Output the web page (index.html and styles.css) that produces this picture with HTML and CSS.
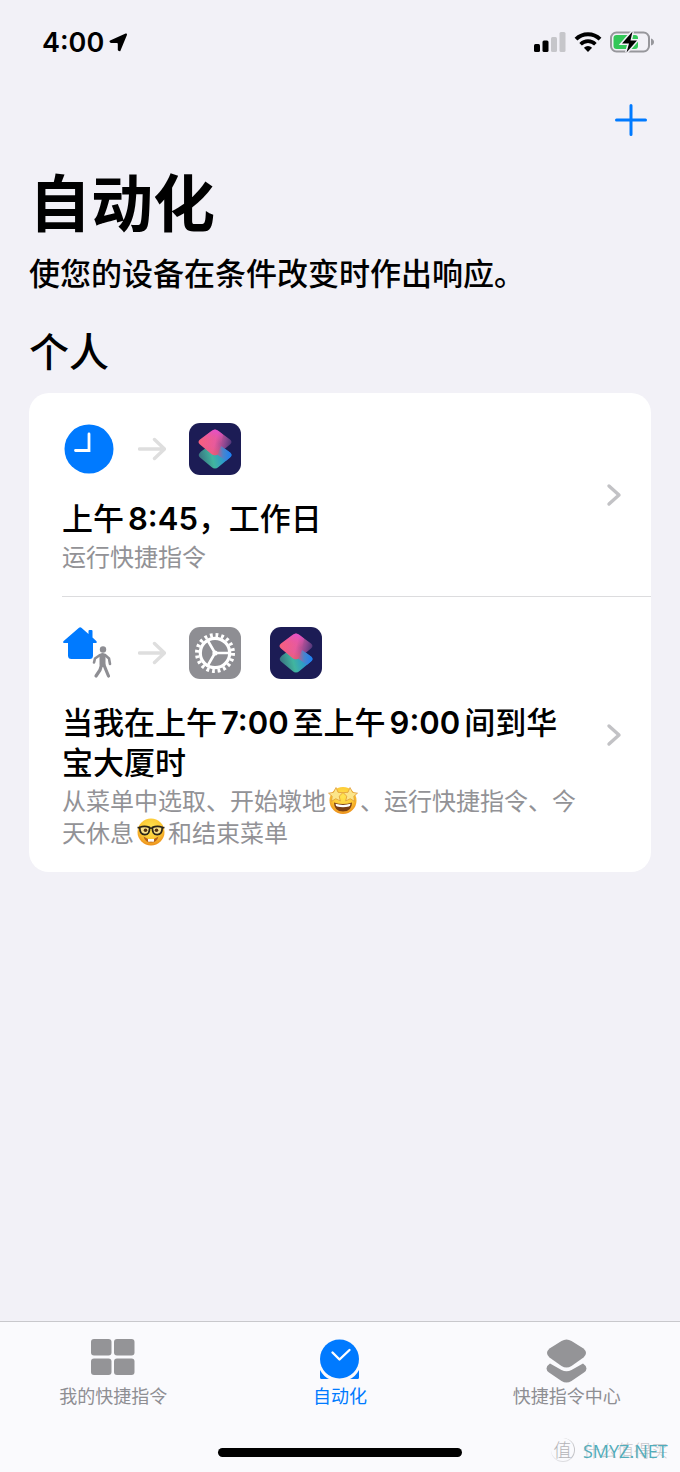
FILE: index.html
```html
<!DOCTYPE html>
<html lang="zh-CN">
<head>
    <meta charset="UTF-8">
    <meta name="viewport" content="width=device-width, initial-scale=1">
    <title>自动化</title>
    <link rel="stylesheet" href="styles.css">
</head>
<body>
    <!-- 公用图标 -->
    <svg class="defs" aria-hidden="true">
        <defs>
            <linearGradient id="pink" x1="0" y1="0.4" x2="1" y2="0.6">
                <stop offset="0" stop-color="#f9607a"/>
                <stop offset="0.5" stop-color="#e85a9c"/>
                <stop offset="0.8" stop-color="#8b4790"/>
                <stop offset="1" stop-color="#4a3576"/>
            </linearGradient>
            <linearGradient id="glow" x1="0.5" y1="0" x2="0.4" y2="1">
                <stop offset="0" stop-color="#e24be0" stop-opacity="0.7"/>
                <stop offset="0.5" stop-color="#e85a9c" stop-opacity="0"/>
                <stop offset="1" stop-color="#f4605f" stop-opacity="0.7"/>
            </linearGradient>
            <linearGradient id="teal" x1="0" y1="0.6" x2="1" y2="0.4">
                <stop offset="0" stop-color="#39707f"/>
                <stop offset="0.4" stop-color="#41b59f"/>
                <stop offset="1" stop-color="#1a80f5"/>
            </linearGradient>
            <linearGradient id="fold" x1="0" y1="0.5" x2="1" y2="0.5">
                <stop offset="0" stop-color="#b8628f"/>
                <stop offset="0.4" stop-color="#4a85cc"/>
                <stop offset="1" stop-color="#1a80f5"/>
            </linearGradient>
            <radialGradient id="face" cx="0.5" cy="0.35" r="0.65">
                <stop offset="0" stop-color="#ffe552"/>
                <stop offset="0.6" stop-color="#fdc934"/>
                <stop offset="1" stop-color="#ec8f1c"/>
            </radialGradient>
        </defs>
        <symbol id="shortcuts" viewBox="0 0 52 52">
            <rect width="52" height="52" rx="11" fill="#1c1c55"/>
            <path d="M12 28.500 L24 20 Q26 18.500 28 20 L41 29.500 Q44 32 41 34.500 L29.500 44 Q26 47 22.500 44 L11 34.500 Q8 32 12 28.500Z" fill="url(#teal)"/>
            <path d="M22.500 8 Q26 5 29.500 8 L41 16.500 Q44 19 41 21.500 L29.500 31 Q26 33.500 22.500 31 L11 21.500 Q8 19 11 16.500Z" fill="url(#pink)"/>
            <path d="M22.500 8 Q26 5 29.500 8 L34 11.500 L31 29.800 L29.500 31 Q26 33.500 22.500 31 L11 21.500 Q8 19 11 16.500Z" fill="url(#glow)"/>
            <path d="M32 23 L41 29.500 Q44 32 41 34.500 L37 37.800 L28.500 31.800Z" fill="url(#fold)"/>
        </symbol>
        <symbol id="arrow" viewBox="0 0 28 24">
            <path d="M1.500 12H26M16.500 2.500L26.500 12l-10 9.500" fill="none" stroke="#dedede" stroke-width="3.400" stroke-linecap="round" stroke-linejoin="round"/>
        </symbol>
        <symbol id="chevron" viewBox="0 0 16 24">
            <path d="M3 3l10 9L3 21" fill="none" stroke="#c2c2c5" stroke-width="3.400" stroke-linecap="round" stroke-linejoin="round"/>
        </symbol>
    </svg>

    <header class="status">
        <div class="time">
            <span>4:00</span>
            <svg width="19" height="19" viewBox="0 0 19 19"><path d="M17 1.500L1.500 8.300 2 9H8.500L9.800 10.300V16.800L10.600 17.200Z" stroke="#000" stroke-width="2" stroke-linejoin="round"/></svg>
        </div>
        <div class="signals">
            <svg width="32" height="20" viewBox="0 0 32 20">
                <rect x="0" y="12" width="6" height="8" rx="1.500"/>
                <rect x="8.500" y="8.500" width="6" height="11.500" rx="1.500"/>
                <rect x="17" y="5" width="6" height="15" rx="1.500" fill="#c6c6ca"/>
                <rect x="25.500" y="0" width="6" height="20" rx="1.500" fill="#c6c6ca"/>
            </svg>
            <svg width="28" height="20" viewBox="0 0 28 20">
                <path d="M2 7.200a17 17 0 0 1 24 0" fill="none" stroke="#000" stroke-width="4"/>
                <path d="M6.600 12.200a10.500 10.500 0 0 1 14.800 0" fill="none" stroke="#000" stroke-width="3.600"/>
                <path d="M9.900 15.700a6 6 0 0 1 8.200 0L14 20Z"/>
            </svg>
            <svg width="44" height="24" viewBox="0 0 44 24">
                <rect x="1" y="2.500" width="38" height="19" rx="5.500" fill="none" stroke="#97979c" stroke-width="2"/>
                <path d="M41 8.500q3 1 3 3.500t-3 3.500Z" fill="#97979c"/>
                <rect x="3.500" y="5" width="24.500" height="14" rx="3" fill="#34c759"/>
                <path d="M22.500 1.500L12 13.500h7L16.500 22.500 27 10.500h-6.500Z" stroke="#f2f1f7" stroke-width="3" paint-order="stroke"/>
            </svg>
        </div>
    </header>

    <nav class="toolbar">
        <button class="add" type="button" aria-label="新建自动化">
            <svg width="32" height="32" viewBox="0 0 32 32"><path d="M16 1.500v29M1.500 16h29" stroke="#007aff" stroke-width="3" stroke-linecap="round"/></svg>
        </button>
    </nav>

    <main class="content">
        <h1>自动化</h1>
        <p class="intro">使您的设备在条件改变时作出响应。</p>
        <h2>个人</h2>

        <div class="card">
            <a class="item" href="#">
                <div class="body">
                    <div class="icons">
                        <svg class="trigger" viewBox="0 0 52 52">
                            <circle cx="27" cy="26" r="24.500" fill="#007aff"/>
                            <path d="M27 11v16.500H13.500" fill="none" stroke="#fff" stroke-width="2.800" stroke-linecap="round"/>
                        </svg>
                        <svg class="arrow"><use href="#arrow"/></svg>
                        <svg class="app"><use href="#shortcuts"/></svg>
                    </div>
                    <h3>上午<span class="num end">8:45</span>，工作日</h3>
                    <p class="detail">运行快捷指令</p>
                </div>
                <svg class="chevron"><use href="#chevron"/></svg>
            </a>
            <a class="item" href="#">
                <div class="body">
                    <div class="icons">
                        <svg class="trigger" viewBox="0 0 52 52">
                            <path d="M17 .8q1.200-1 2.400 0L26.500 7V4q0-1 1-1h2q1 0 1 1v6.500l4 3.800q.8 1.700-1.200 1.700H31v12.500q0 3.500-3.500 3.500h-18Q6 32 6 28.500V16H2.600q-2 0-1.200-1.700Z" fill="#007aff"/>
                            <g fill="none" stroke="#8e8e93" stroke-linecap="round" stroke-linejoin="round">
                                <circle cx="41" cy="22.500" r="3.200" fill="#8e8e93" stroke="none"/>
                                <path d="M40.500 29v8" stroke-width="6"/>
                                <path d="M38 28l-5 3.500-1 4M43 28l4 3.500 1 5.500" stroke-width="2.600"/>
                                <path d="M39.500 38l-1.500 5-4 6M42 38l2 5 2.500 6" stroke-width="3.200"/>
                            </g>
                        </svg>
                        <svg class="arrow"><use href="#arrow"/></svg>
                        <svg class="app" viewBox="0 0 52 52">
                            <rect width="52" height="52" rx="11" fill="#8e8e93"/>
                            <circle cx="26" cy="26" r="18" fill="none" stroke="#fff" stroke-width="4" stroke-dasharray="2.800 2.855"/>
                            <circle cx="26" cy="26" r="14.700" fill="none" stroke="#fff" stroke-width="3.200"/>
                            <path d="M26 26h15M26 26l-7.500-13M26 26l-7.500 13" stroke="#fff" stroke-width="2.600"/>
                            <circle cx="26" cy="26" r="2.600" fill="#fff"/>
                        </svg>
                        <svg class="app"><use href="#shortcuts"/></svg>
                    </div>
                    <h3>当我在上午<span class="num">7:00</span>至上午<span class="num">9:00</span>间到华宝大厦时</h3>
                    <p class="detail">从菜单中选取、开始墩地<svg class="emoji" viewBox="0 0 30 30" role="img" aria-label="好崇拜哦">
                            <circle cx="15" cy="15.500" r="13.500" fill="url(#face)"/>
                            <path d="M6 17.500q9 3 18 0 0 9-9 9T6 17.500Z" fill="#7a3d12"/>
                            <path d="M7.500 18.800q7.500 2.300 15 0-.2 2.500-1.500 2.800-6 1.500-12 0-1.300-.3-1.500-2.800Z" fill="#fff"/>
                            <path d="M8 2.500l2 4.800 4.800.4-3.600 3.500 1.100 4.800-4.500-2.300-4.300 2.600.7-5L.5 8.200l5-.9Z" fill="#fbe58a" stroke="#dc9430" stroke-width=".7"/>
                            <path d="M22 2.500l-2 4.800-4.800.4 3.600 3.500-1.100 4.800 4.500-2.300 4.300 2.600-.7-5 3.700-3.100-5-.9Z" fill="#fbe58a" stroke="#dc9430" stroke-width=".7"/>
                        </svg>、运行快捷指令、今天休息<svg class="emoji" viewBox="0 0 30 30" role="img" aria-label="书呆子脸">
                            <circle cx="15" cy="15" r="13.500" fill="url(#face)"/>
                            <path d="M7.500 19.500q7.500 5.500 15 0-1.500 6-7.500 6t-7.500-6Z" fill="#b5601c"/>
                            <path d="M12 22h6v2.400q-1.500.8-3 0-1.500.8-3 0Z" fill="#fff"/>
                            <g fill="#fbe28a" stroke="#2b2418" stroke-width="1.700">
                                <path d="M3.800 10.200q5-1.800 9.700.2.500 7.300-4.700 7.300t-5-7.500Z"/>
                                <path d="M26.200 10.200q-5-1.800-9.700.2-.5 7.300 4.700 7.300t5-7.500Z"/>
                                <path d="M13.500 11.500q1.500-1 3 0M1.500 10.500l2.300.3M28.500 10.500l-2.300.3" fill="none"/>
                            </g>
                            <circle cx="9.500" cy="13.300" r="1.800" fill="#54300f"/>
                            <circle cx="20.500" cy="13.300" r="1.800" fill="#54300f"/>
                        </svg>和结束菜单</p>
                </div>
                <svg class="chevron"><use href="#chevron"/></svg>
            </a>
        </div>
    </main>

    <footer class="tabbar">
        <nav class="tabs">
            <a class="tab" href="#">
                <svg width="44" height="44" viewBox="0 0 44 44" fill="#949497">
                    <rect x="0" y="0" width="20.500" height="16.500" rx="3"/>
                    <rect x="23" y="0" width="20.500" height="16.500" rx="3"/>
                    <rect x="0" y="19.500" width="20.500" height="16.500" rx="3"/>
                    <rect x="23" y="19.500" width="20.500" height="16.500" rx="3"/>
                </svg>
                <span>我的快捷指令</span>
            </a>
            <a class="tab on" href="#">
                <svg width="44" height="44" viewBox="0 0 44 44">
                    <path d="M2 31q3.500 6.500 9 9H3.500q-1.500 0-1.500-1.500ZM41 31q-3.500 6.500-9 9h7.500q1.500 0 1.500-1.500Z" fill="#007aff"/>
                    <circle cx="21.500" cy="20" r="19.500" fill="#007aff"/>
                    <path d="M14.500 13.500l7 7L31.500 11" fill="none" stroke="#fff" stroke-width="2.400" stroke-linecap="round" stroke-linejoin="round"/>
                </svg>
                <span>自动化</span>
            </a>
            <a class="tab" href="#">
                <svg width="44" height="44" viewBox="0 0 44 44" fill="#949497">
                    <path d="M16.500 2Q21.500-1 26.500 2L38.500 9.500q5 4.500 0 9L26.500 27q-5 3-10 0L4.500 18.500q-5-4.500 0-9Z"/>
                    <path d="M5 24.500L16.500 31q5 2.500 10 0L38 24.500q6.500 4.500 1 9L26.500 42q-5 3-10 0L4 33.500q-5.500-4.500 1-9Z"/>
                </svg>
                <span>快捷指令中心</span>
            </a>
        </nav>
        <div class="home"></div>
        <div class="watermark">
            <span class="badge">值</span>
            <span class="under">什么值得买</span>
            <span class="site">SMYZ.NET</span>
        </div>
    </footer>
</body>
</html>
```

FILE: styles.css
```css
*{
    margin:0;
    padding:0;
    box-sizing:border-box;
}

body{
    min-height:100vh;
    display:flex;
    flex-direction:column;
    background-color:#f2f1f7;
    color:#000;
    font-family:"Noto Sans CJK SC", sans-serif;
}

a{
    color:inherit;
    text-decoration:none;
}

svg{
    flex:none;
}

.defs{
    position:absolute;
    width:0;
    height:0;
}

/* 状态栏 */
.status{
    height:84px;
    padding:0 26px 0 42px;
    display:flex;
    align-items:center;
    justify-content:space-between;
}

.time{
    display:flex;
    align-items:center;
    gap:5px;
    font-family:Inter, sans-serif;
    font-size:27px;
    font-weight:600;
}

.signals{
    display:flex;
    align-items:center;
    gap:8px;
}

.toolbar{
    height:72px;
    padding:0 33px;
    display:flex;
    align-items:center;
    justify-content:flex-end;
}

.add{
    height:32px;
    border:0;
    background:none;
    cursor:pointer;
}

/* 内容 */
.content{
    flex:1;
    padding:8px 29px 40px;
}

h1{
    font-size:62px;
    line-height:72px;
    font-weight:700;
}

.intro{
    margin-top:16px;
    font-size:31px;
    line-height:40px;
    font-weight:500;
}

h2{
    margin-top:34px;
    font-size:40px;
    line-height:48px;
    font-weight:500;
}

.card{
    margin-top:19px;
    padding-left:33px;
    border-radius:20px;
    background-color:#fff;
}

.item{
    padding-right:29px;
    display:flex;
    align-items:center;
    justify-content:space-between;
    gap:24px;
}

.item + .item{
    border-top:1px solid #dcdcde;
}

.body{
    padding:30px 0 24px;
}

.icons{
    display:flex;
    align-items:center;
}

.trigger,
.app{
    width:52px;
    height:52px;
}

.arrow{
    width:28px;
    height:24px;
    margin:0 23px 0 24px;
}

.app + .app{
    margin-left:29px;
}

h3{
    margin-top:22px;
    font-size:31px;
    line-height:40px;
    font-weight:500;
}

.num{
    margin:0 4px;
    font-family:Inter, sans-serif;
    font-weight:600;
    line-height:1;
}

.num.end{
    margin-right:0;
}

.detail{
    margin-top:3px;
    color:#929296;
    font-size:24px;
    line-height:32px;
    font-weight:400;
}

.emoji{
    width:30px;
    height:30px;
    margin:0 2px;
    vertical-align:-5px;
}

.chevron{
    width:16px;
    height:24px;
}

/* 底部标签栏 */
.tabbar{
    position:relative;
    padding:17px 0 15px;
    border-top:1px solid #c8c8cc;
    background-color:#fafafd;
}

.tabs{
    display:grid;
    grid-template-columns:repeat(3, 1fr);
}

.tab{
    display:flex;
    flex-direction:column;
    align-items:center;
    color:#8e8e93;
    font-size:18px;
    line-height:24px;
}

.tab.on{
    color:#007aff;
}

.home{
    width:36%;
    height:9px;
    margin:41px auto 0;
    border-radius:5px;
    background-color:#000;
}

/* 水印 */
.watermark{
    position:absolute;
    right:12px;
    bottom:8px;
    display:flex;
    align-items:center;
    gap:8px;
    line-height:28px;
}

.badge{
    width:24px;
    height:24px;
    border-right:1px solid #c4c4c8;
    border-bottom:1px solid #dcdce0;
    border-radius:50%;
    color:#b4b4b8;
    font-size:18px;
    font-weight:300;
    line-height:22px;
    text-align:center;
}

.under{
    color:#c8c8cc;
    font-size:17px;
    font-weight:300;
}

.site{
    position:absolute;
    left:32px;
    top:1px;
    color:#52adbb;
    font-family:"Open Sans", sans-serif;
    font-size:18px;
}
```
